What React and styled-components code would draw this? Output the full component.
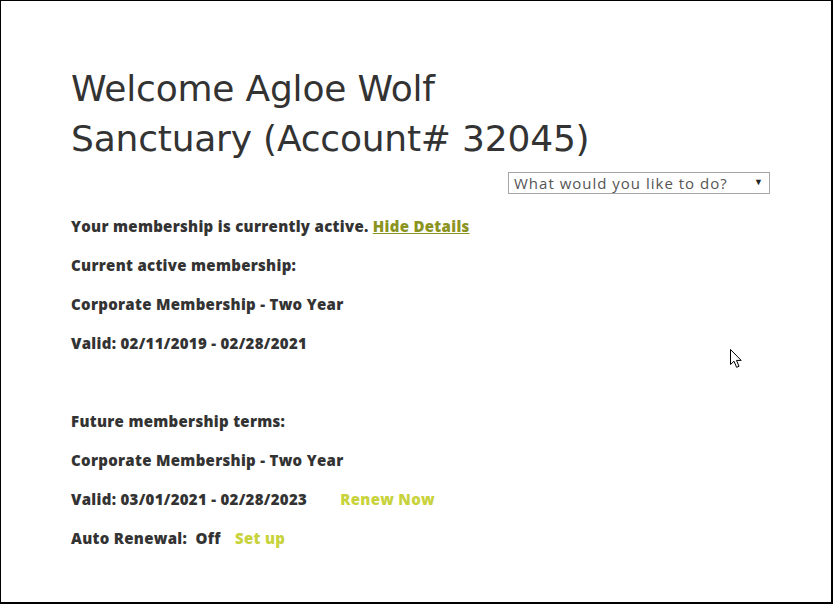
import React from 'react'
import styled, { createGlobalStyle } from 'styled-components'

const Global = createGlobalStyle`
  html, body { margin: 0; padding: 0; background: #fff; }
  * { box-sizing: border-box; }
`

const App = () => {
  return (
    <Frame>
      <Global />
      <Content>
        <Title>Welcome Agloe Wolf<br />Sanctuary (Account# 32045)</Title>
        <ActionRow>
          <SelectWrap>
            <Select defaultValue="">
              <option value="">What would you like to do?</option>
              <option>Renew membership</option>
              <option>Update account</option>
            </Select>
            <Caret>▼</Caret>
          </SelectWrap>
        </ActionRow>
        <Details>
          <Line>
            Your membership is currently active. <HideLink href="#">Hide Details</HideLink>
          </Line>
          <Line>Current active membership:</Line>
          <Line>Corporate Membership - Two Year</Line>
          <Line>Valid: 02/11/2019 - 02/28/2021</Line>
          <Spacer />
          <Line>Future membership terms:</Line>
          <Line>Corporate Membership - Two Year</Line>
          <Line>
            Valid: 03/01/2021 - 02/28/2023 <Action href="#" gap={29}>Renew Now</Action>
          </Line>
          <Line>
            Auto Renewal:&nbsp; Off <Action href="#" gap={10}>Set up</Action>
          </Line>
        </Details>
      </Content>
      <Pointer viewBox="0 0 12 19" width="12" height="19">
        <path d="M0.5 0.5 L0.5 15.5 L4 12.2 L6.6 18.3 L9 17.3 L6.5 11.4 L11.2 11.4 Z" fill="#fff" stroke="#000" strokeWidth="1" strokeLinejoin="miter" />
      </Pointer>
    </Frame>
  )
}

//styled components
const Frame = styled.div`
  position: relative;
  width: 833px;
  height: 604px;
  border: 1px solid #000;
  border-right-width: 2px;
  border-bottom-width: 2px;
  background: #fff;
  overflow: hidden;
`

const Content = styled.div`
  padding: 63px 61px 0 70px;
  color: #333;
`

const Title = styled.h1`
  margin: 0;
  font-family: 'DejaVu Sans', sans-serif;
  font-weight: normal;
  font-size: 36px;
  line-height: 50px;
  color: #333;
  letter-spacing: -0.2px;
`

const ActionRow = styled.div`
  display: flex;
  justify-content: flex-end;
  margin-top: 8px;
`

const SelectWrap = styled.div`
  position: relative;
  width: 262px;
  height: 22px;
`

const Select = styled.select`
  width: 100%;
  height: 100%;
  padding: 0 20px 0 5px;
  border: 1px solid #a6a6a6;
  border-radius: 0;
  background: #fff;
  font-family: 'Open Sans', sans-serif;
  font-size: 15px;
  letter-spacing: 1px;
  color: #555;
  appearance: none;
  outline: none;
`

const Caret = styled.span`
  position: absolute;
  right: 7px;
  top: 5px;
  font-size: 9px;
  line-height: 10px;
  color: #222;
  pointer-events: none;
`

const Details = styled.div`
  margin-top: 23px;
  font-family: 'Open Sans', sans-serif;
  font-weight: 800;
  font-size: 15px;
  letter-spacing: 0.3px;
`

const Line = styled.p`
  margin: 0 0 20px;
  line-height: 19px;
  color: #333;
`

const Spacer = styled.div`
  height: 39px;
`

const HideLink = styled.a`
  color: #8b9421;
  text-decoration: underline;
`

const Action = styled.a`
  margin-left: ${p => p.gap}px;
  color: #c8d33c;
  text-decoration: none;
`

const Pointer = styled.svg`
  position: absolute;
  left: 729px;
  top: 348px;
`

export default App
